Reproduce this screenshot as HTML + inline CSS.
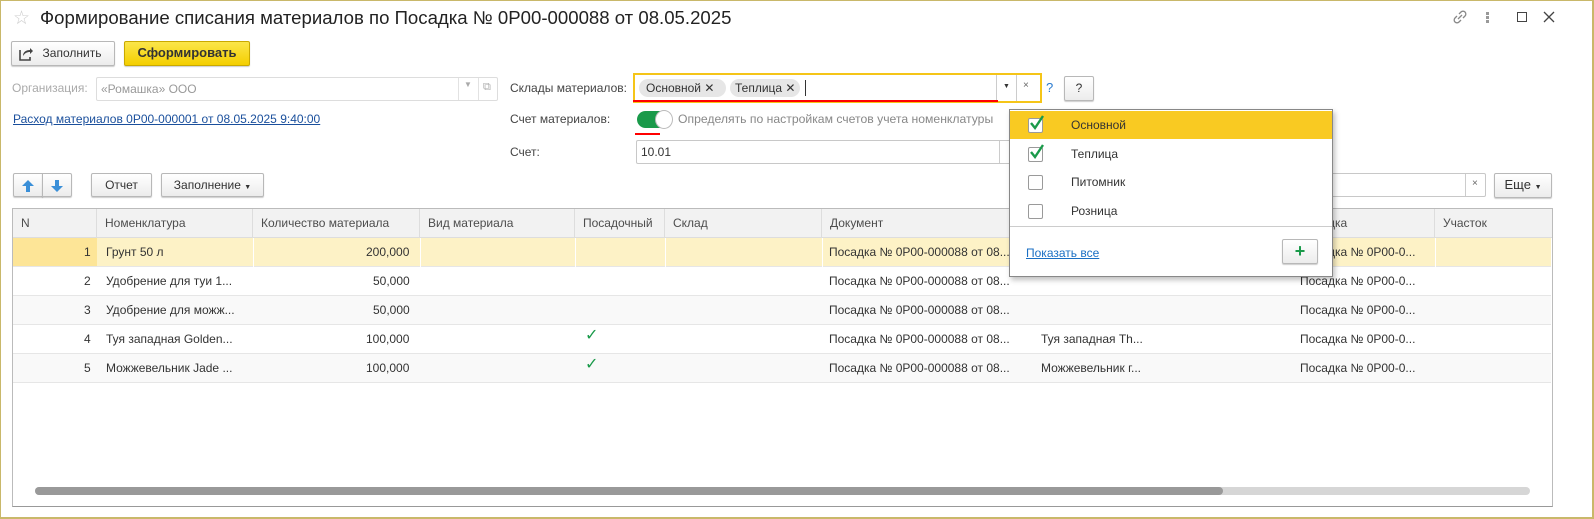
<!DOCTYPE html>
<html><head><meta charset="utf-8"><style>
*{box-sizing:border-box;margin:0;padding:0}
body{width:1594px;height:519px;overflow:hidden;background:#fff;font-family:"Liberation Sans",Arial,sans-serif;font-size:12px;color:#333;position:relative}
.a{position:absolute}
.frame{left:0;top:0;width:1594px;height:519px;border:1px solid #c9b86a;border-right-width:2px;border-bottom-width:2px}
.btn{position:absolute;border:1px solid #b8b8b8;border-radius:2px;background:linear-gradient(#fff,#ececec);box-shadow:0 1px 1px rgba(0,0,0,.2);text-align:center;line-height:22px;color:#333}
.inp{position:absolute;border:1px solid #c8c8c8;border-radius:2px;background:#fff}
.t{position:absolute;white-space:nowrap}
.hd{position:absolute;top:209px;height:29px;background:#f2f2f2;border-right:1px solid #ddd;border-bottom:1px solid #ddd;line-height:28px;padding-left:8px;color:#4d4d4d}
.row{position:absolute;left:13px;width:1538px;height:29px;border-bottom:1px solid #e6e6e6}
.c{position:absolute;top:0;line-height:28px;white-space:nowrap;color:#333}
.chk{position:absolute;width:15px;height:15px;border:1px solid #9a9a9a;border-radius:2px;background:#fff}
</style></head><body>
<div class="a frame"></div>
<div class="t" style="left:13px;top:7px;font-size:19px;color:#ccc">☆</div>
<div class="t" style="left:40px;top:7px;font-size:18.6px;color:#222">Формирование списания материалов по Посадка № 0P00-000088 от 08.05.2025</div>
<svg class="a" style="left:1452px;top:9px" width="16" height="16" viewBox="0 0 16 16"><path d="M7 5l2-2a2.8 2.8 0 014 4l-2 2M9 11l-2 2a2.8 2.8 0 01-4-4l2-2M6 10l4-4" stroke="#888" stroke-width="1.3" fill="none"/></svg>
<div class="a" style="left:1486px;top:12px;width:3px;height:3px;background:#999;box-shadow:0 4px 0 #999,0 8px 0 #999"></div>
<div class="a" style="left:1517px;top:12px;width:10px;height:10px;border:1.5px solid #444"></div>
<svg class="a" style="left:1543px;top:11px" width="12" height="12" viewBox="0 0 12 12"><path d="M1 1l10 10M11 1L1 11" stroke="#444" stroke-width="1.3"/></svg>

<div class="btn" style="left:11px;top:41px;width:104px;height:25px"><svg class="a" style="left:6px;top:4px" width="16" height="16" viewBox="0 0 16 16"><path d="M2 4v10h10v-3" stroke="#444" stroke-width="1.6" fill="none"/><path d="M5 10c0-4 3-6 7-6V2l3 3-3 3V6c-3 0-5 1-7 4z" fill="#444"/></svg><span style="padding-left:18px">Заполнить</span></div>
<div class="btn" style="left:124px;top:41px;width:126px;height:25px;background:linear-gradient(#fbe64a,#f4cf00);border-color:#c9a900;font-weight:bold;font-size:13px">Сформировать</div>

<div class="t" style="left:12px;top:81px;color:#aaa">Организация:</div>
<div class="inp" style="left:96px;top:77px;width:402px;height:24px;border-color:#ddd"><span class="t" style="left:4px;top:4px;color:#999">«Ромашка» ООО</span><div class="a" style="left:361px;top:0;height:22px;border-left:1px solid #e2e2e2"></div><span class="t" style="left:367px;top:2px;font-size:8px;color:#aaa">▼</span><div class="a" style="left:381px;top:0;height:22px;border-left:1px solid #e2e2e2"></div><span class="t" style="left:386px;top:3px;color:#aaa;font-size:11px">⧉</span></div>
<div class="t" style="left:13px;top:112px;color:#1a4f9c;text-decoration:underline">Расход материалов 0P00-000001 от 08.05.2025 9:40:00</div>

<div class="t" style="left:510px;top:81px;color:#444">Склады материалов:</div>
<div class="a" style="left:633px;top:73px;width:409px;height:30px;border:2px solid #f5c518;background:#fff">
 <div class="a" style="left:4px;top:4px;height:18px;width:87px;background:#e6e6e6;border-radius:9px;padding-left:7px;line-height:18px">Основной ✕</div>
 <div class="a" style="left:95px;top:4px;height:18px;width:70px;background:#e6e6e6;border-radius:9px;padding-left:5px;line-height:18px">Теплица ✕</div>
 <div class="a" style="left:170px;top:5px;height:16px;border-left:1px solid #333"></div>
 <div class="a" style="left:361px;top:0;height:26px;border-left:1px solid #ccc"></div><span class="t" style="left:368px;top:8px;font-size:7px">▼</span>
 <div class="a" style="left:381px;top:0;height:26px;border-left:1px solid #ccc"></div><span class="t" style="left:388px;top:5px;font-size:10px;color:#666">×</span>
</div>
<div class="a" style="left:633px;top:100px;width:365px;height:2px;background:#f00"></div>
<div class="t" style="left:1046px;top:80px;color:#2a7bd0;font-size:13px">?</div>
<div class="btn" style="left:1064px;top:76px;width:30px;height:25px">?</div>

<div class="t" style="left:510px;top:112px;color:#444">Счет материалов:</div>
<div class="a" style="left:637px;top:111px;width:35px;height:17px;border-radius:9px;background:#1a9a4a"></div>
<div class="a" style="left:655px;top:110px;width:18px;height:19px;border-radius:50%;background:#fff;border:1px solid #bbb"></div>
<div class="a" style="left:635px;top:133px;width:25px;height:2px;background:#f00"></div>
<div class="t" style="left:678px;top:112px;color:#888;font-size:12.2px">Определять по настройкам счетов учета номенклатуры</div>
<div class="t" style="left:510px;top:145px;color:#444">Счет:</div>
<div class="inp" style="left:636px;top:140px;width:380px;height:24px"><span class="t" style="left:4px;top:4px">10.01</span><div class="a" style="left:362px;top:0;height:22px;border-left:1px solid #ccc"></div></div>

<div class="btn" style="left:13px;top:173px;width:30px;height:24px;border-radius:2px 0 0 2px"><svg width="14" height="14" style="margin-top:5px" viewBox="0 0 14 14"><path d="M7 1l6 6H9v6H5V7H1z" fill="#3a8fd8"/></svg></div>
<div class="btn" style="left:42px;top:173px;width:30px;height:24px;border-radius:0 2px 2px 0"><svg width="14" height="14" style="margin-top:5px" viewBox="0 0 14 14"><path d="M7 13l6-6H9V1H5v6H1z" fill="#3a8fd8"/></svg></div>
<div class="btn" style="left:91px;top:173px;width:61px;height:24px">Отчет</div>
<div class="btn" style="left:161px;top:173px;width:103px;height:24px">Заполнение <span style="font-size:7px">▼</span></div>
<div class="inp" style="left:1320px;top:173px;width:166px;height:24px"><div class="a" style="left:144px;top:0;height:22px;border-left:1px solid #ccc"></div><span class="t" style="left:151px;top:4px;font-size:10px;color:#666">×</span></div>
<div class="btn" style="left:1494px;top:173px;width:58px;height:25px;font-size:13px">Еще <span style="font-size:7px">▼</span></div>

<div class="a" style="left:12px;top:208px;width:1541px;height:299px;border:1px solid #bbb;border-bottom-color:#999"></div>
<div class="hd" style="left:13px;width:84px">N</div>
<div class="hd" style="left:97px;width:156px">Номенклатура</div>
<div class="hd" style="left:253px;width:167px">Количество материала</div>
<div class="hd" style="left:420px;width:155px">Вид материала</div>
<div class="hd" style="left:575px;width:90px">Посадочный</div>
<div class="hd" style="left:665px;width:157px">Склад</div>
<div class="hd" style="left:822px;width:211px">Документ</div>
<div class="hd" style="left:1033px;width:259px"></div>
<div class="hd" style="left:1292px;width:143px">Посадка</div>
<div class="hd" style="left:1435px;width:117px;border-right:none">Участок</div>

<div class="row" style="top:238px;background:#fdf2c6"><div class="a" style="left:0;top:0;width:84px;height:28px;background:#fde597"></div></div>
<div class="row" style="top:267px;background:#fff"></div>
<div class="row" style="top:296px;background:#f9f9f9"></div>
<div class="row" style="top:325px;background:#fff"></div>
<div class="row" style="top:354px;background:#f9f9f9"></div>
<div class="a" style="left:253px;top:238px;width:1px;height:29px;background:#fff"></div>
<div class="a" style="left:420px;top:238px;width:1px;height:29px;background:#fff"></div>
<div class="a" style="left:575px;top:238px;width:1px;height:29px;background:#fff"></div>
<div class="a" style="left:665px;top:238px;width:1px;height:29px;background:#fff"></div>
<div class="a" style="left:822px;top:238px;width:1px;height:29px;background:#fff"></div>
<div class="a" style="left:1435px;top:238px;width:1px;height:29px;background:#fff"></div>

<div style="position:absolute;left:0;top:238px">
<div class="c" style="left:84px;top:0">1</div><div class="c" style="left:106px;top:0">Грунт 50 л</div><div class="c" style="left:366px;top:0">200,000</div><div class="c" style="left:829px;top:0">Посадка № 0P00-000088 от 08...</div><div class="c" style="left:1300px;top:0">Посадка № 0P00-0...</div>
<div class="c" style="left:84px;top:29px">2</div><div class="c" style="left:106px;top:29px">Удобрение для туи 1...</div><div class="c" style="left:373px;top:29px">50,000</div><div class="c" style="left:829px;top:29px">Посадка № 0P00-000088 от 08...</div><div class="c" style="left:1300px;top:29px">Посадка № 0P00-0...</div>
<div class="c" style="left:84px;top:58px">3</div><div class="c" style="left:106px;top:58px">Удобрение для можж...</div><div class="c" style="left:373px;top:58px">50,000</div><div class="c" style="left:829px;top:58px">Посадка № 0P00-000088 от 08...</div><div class="c" style="left:1300px;top:58px">Посадка № 0P00-0...</div>
<div class="c" style="left:84px;top:87px">4</div><div class="c" style="left:106px;top:87px">Туя западная Golden...</div><div class="c" style="left:366px;top:87px">100,000</div><div class="c" style="left:585px;top:84px;color:#1a9a4a;font-size:16px">✓</div><div class="c" style="left:829px;top:87px">Посадка № 0P00-000088 от 08...</div><div class="c" style="left:1041px;top:87px">Туя западная Th...</div><div class="c" style="left:1300px;top:87px">Посадка № 0P00-0...</div>
<div class="c" style="left:84px;top:116px">5</div><div class="c" style="left:106px;top:116px">Можжевельник Jade ...</div><div class="c" style="left:366px;top:116px">100,000</div><div class="c" style="left:585px;top:113px;color:#1a9a4a;font-size:16px">✓</div><div class="c" style="left:829px;top:116px">Посадка № 0P00-000088 от 08...</div><div class="c" style="left:1041px;top:116px">Можжевельник г...</div><div class="c" style="left:1300px;top:116px">Посадка № 0P00-0...</div>
</div>

<div class="a" style="left:35px;top:487px;width:1495px;height:8px;border-radius:4px;background:#d6d6d6"></div>
<div class="a" style="left:35px;top:487px;width:1188px;height:8px;border-radius:4px;background:#999"></div>

<div class="a" style="left:1009px;top:109px;width:324px;height:168px;background:#fff;border:1px solid #888;box-shadow:2px 3px 5px rgba(0,0,0,.25)">
 <div class="a" style="left:0;top:1px;width:322px;height:28px;background:#f9ca22"></div>
 <div class="chk" style="left:18px;top:8px"></div><svg class="a" style="left:19px;top:5px" width="16" height="16" viewBox="0 0 16 16"><path d="M2 8l4 5 8-12" stroke="#1a9a4a" stroke-width="2.4" fill="none"/></svg><div class="t" style="left:61px;top:8px">Основной</div>
 <div class="chk" style="left:18px;top:37px"></div><svg class="a" style="left:19px;top:34px" width="16" height="16" viewBox="0 0 16 16"><path d="M2 8l4 5 8-12" stroke="#1a9a4a" stroke-width="2.4" fill="none"/></svg><div class="t" style="left:61px;top:37px">Теплица</div>
 <div class="chk" style="left:18px;top:65px"></div><div class="t" style="left:61px;top:65px">Питомник</div>
 <div class="chk" style="left:18px;top:94px"></div><div class="t" style="left:61px;top:94px">Розница</div>
 <div class="a" style="left:0;top:116px;width:322px;height:1px;background:#ccc"></div>
 <div class="t" style="left:16px;top:136px;color:#1a6fc4;text-decoration:underline">Показать все</div>
 <div class="btn" style="left:272px;top:129px;width:36px;height:25px;color:#1a9a4a;font-size:18px;font-weight:bold;line-height:22px">+</div>
</div>
</body></html>
